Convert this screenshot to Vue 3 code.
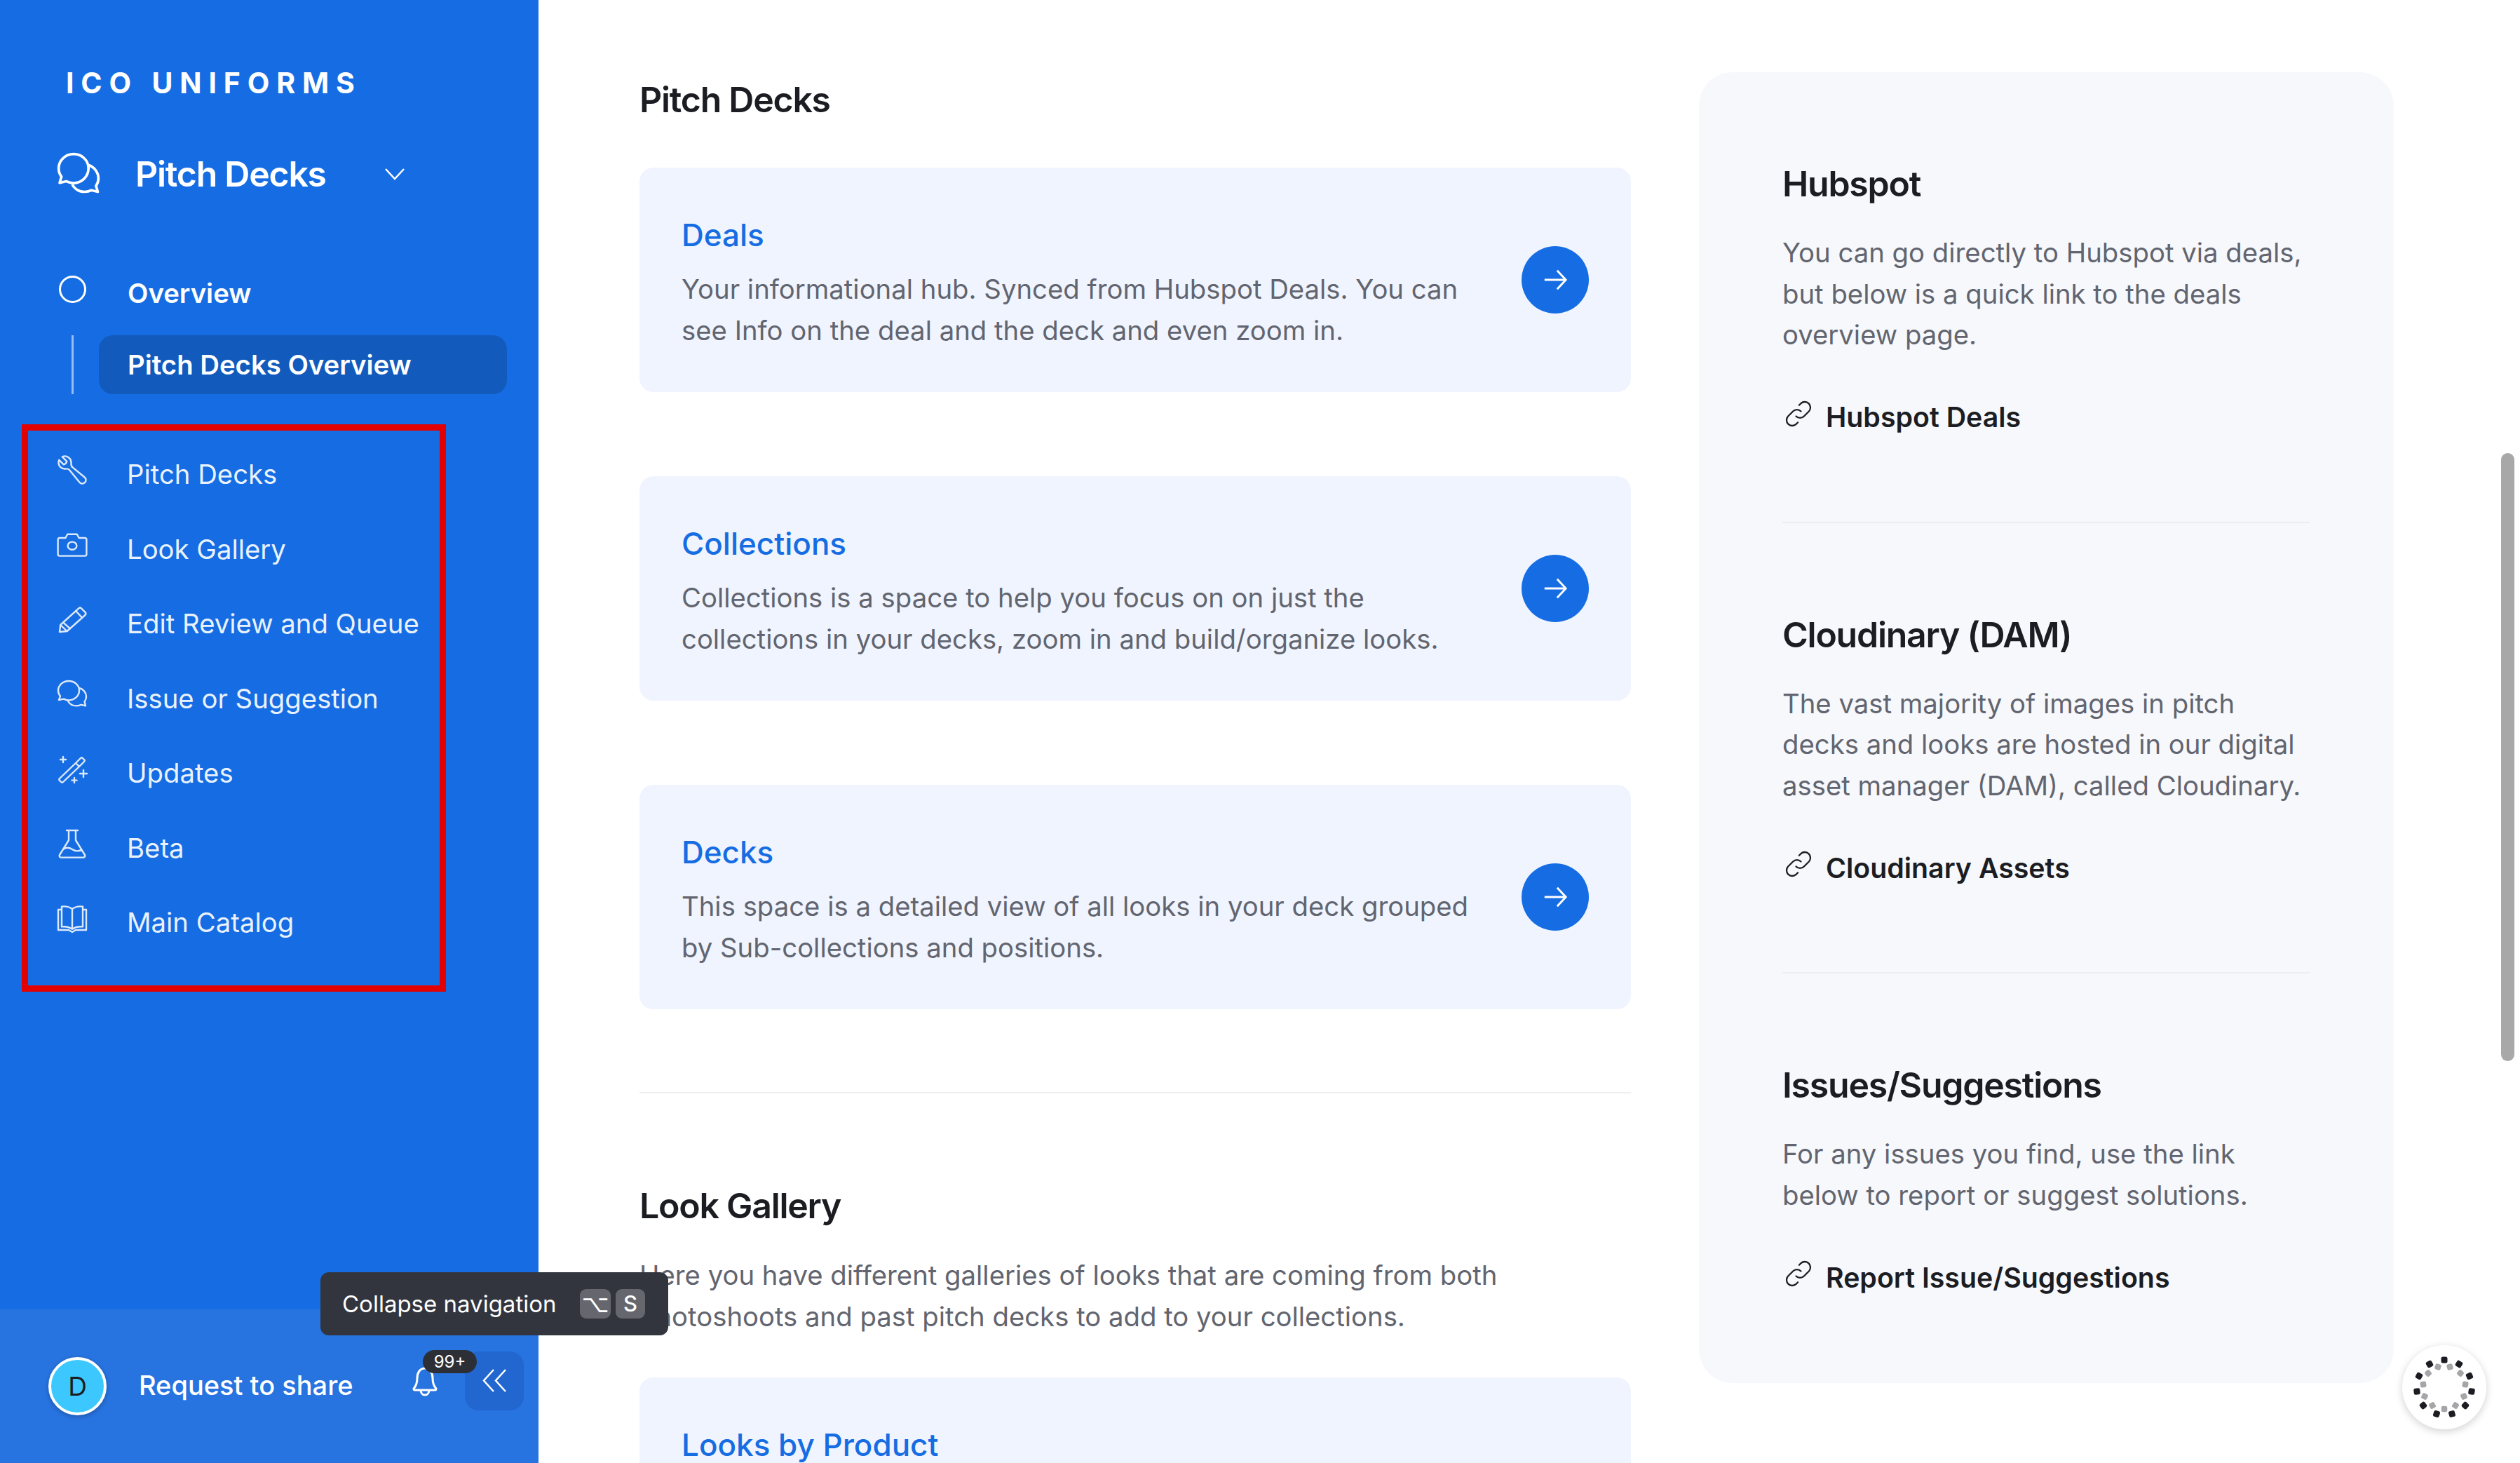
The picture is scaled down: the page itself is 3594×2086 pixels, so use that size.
<script setup>
const navItems = [
  { label: 'Pitch Decks', icon: 'wrench' },
  { label: 'Look Gallery', icon: 'camera' },
  { label: 'Edit Review and Queue', icon: 'pencil' },
  { label: 'Issue or Suggestion', icon: 'chats' },
  { label: 'Updates', icon: 'wand' },
  { label: 'Beta', icon: 'flask' },
  { label: 'Main Catalog', icon: 'book' }
]

const iconPaths = {
  wrench: 'M2.25 6.75a4.5 4.5 0 0 0 4.884 4.484c1.076-.091 2.264.071 2.95.904l7.152 8.684a2.548 2.548 0 1 0 3.586-3.586l-8.684-7.152c-.833-.686-.995-1.874-.904-2.95a4.5 4.5 0 0 0-6.336-4.486l3.276 3.276a3.004 3.004 0 0 1-2.25 2.25L2.648 4.898c-.256.565-.398 1.192-.398 1.852z',
  camera: 'M3 7h4.2l1.4-2.6h6.8L16.8 7H21a1.2 1.2 0 0 1 1.2 1.2v10.4A1.2 1.2 0 0 1 21 19.8H3a1.2 1.2 0 0 1-1.2-1.2V8.200A1.200 1.200 0 0 1 3 7zM12 9.800a3.200 2.800 0 1 0 0 5.600 3.200 2.800 0 0 0 0-5.600z',
  pencil: 'M3 21l.6-5L16.500 4.300a1.500 1.500 0 0 1 2.100 0l2.600 2.600a1.500 1.500 0 0 1 0 2.100L8.300 20.500 3 21zM3.600 16l4.700 4.500M5.500 14.200l5 4.500M14.500 6l4.500 4.800',
  chats: 'M9.500 2.500C5.400 2.500 2 5.500 2 9.300c0 1.500.5 2.900 1.500 4L2.500 16l3.500-.7c1.100.6 2.200.9 3.500.9 4.100 0 7.500-3 7.500-6.900s-3.400-6.800-7.500-6.800zM17 7.500c2.900.7 5 3.200 5 6.200 0 1.300-.5 2.500-1.200 3.500l.7 3-3-.8c-1 .5-2.100.8-3.300.8-2.800 0-5.200-1.400-6.300-3.600',
  wand: 'M3 19l11.500-11 2.500 2.500L5.500 21.500a1 1 0 0 1-1.400 0l-1.100-1.100a1 1 0 0 1 0-1.400zM14.500 8l3.500-3.500a1 1 0 0 1 1.400 0l1.100 1.100a1 1 0 0 1 0 1.400L17 10.500M5.500 3.500v4M3.500 5.500h4M20 13v5M17.500 15.500h5M13.500 18.500v3.500M11.700 20.300h3.600',
  flask: 'M8 2.500h8M9.500 2.500v7L3 20a1.200 1.200 0 0 0 1 1.800h16a1.200 1.200 0 0 0 1-1.800L14.500 9.500v-7M5.500 16c2-1.500 4.500-1.300 6.500 0s4.500 1.500 6.500.3',
  book: 'M12 5.500C10 4 7 3.500 4.500 3.800v14.400c2.500-.3 5.500.2 7.500 1.700 2-1.500 5-2 7.500-1.700V3.800C17 3.500 14 4 12 5.500zM12 5.500v14.400M4.500 6H2v14.500h7.500L12 22l2.500-1.500H22V6h-2.500'
}

const chatIcon = 'M9.500 2C5.400 2 2 5.200 2 9.200c0 1.600.5 3 1.400 4.200L2.500 16.500l3.300-.8c1.100.6 2.300.9 3.700.9 4.100 0 7.500-3.300 7.500-7.400S13.600 2 9.500 2zM17 7.500c2.900 1 5 3.600 5 6.700 0 1.400-.4 2.700-1.200 3.800l.9 3-3.200-.8c-1 .5-2.200.8-3.400.8-2.800 0-5.200-1.500-6.300-3.800'

const cards = [
  { title: 'Deals', text: 'Your informational hub. Synced from Hubspot Deals. You can see Info on the deal and the deck and even zoom in.' },
  { title: 'Collections', text: 'Collections is a space to help you focus on on just the collections in your decks, zoom in and build/organize looks.' },
  { title: 'Decks', text: 'This space is a detailed view of all looks in your deck grouped by Sub-collections and positions.' }
]

const panels = [
  { title: 'Hubspot', text: 'You can go directly to Hubspot via deals, but below is a quick link to the deals overview page.', link: 'Hubspot Deals' },
  { title: 'Cloudinary (DAM)', text: 'The vast majority of images in pitch decks and looks are hosted in our digital asset manager (DAM), called Cloudinary.', link: 'Cloudinary Assets' },
  { title: 'Issues/Suggestions', text: 'For any issues you find, use the link below to report or suggest solutions.', link: 'Report Issue/Suggestions' }
]

// dot positions read off the widget, relative to its centre
const outerDots = [[0, -39], [21, -33], [36, -16], [39, 6], [30, 26], [11, 38], [-11, 38], [-30, 26], [-39, 6], [-36, -16], [-21, -33]]
const innerDots = [[0, 31], [16, 26], [28, 13], [30, -4], [23, -20], [8, -29], [-9, -29], [-23, -20], [-30, -4], [-28, 13], [-17, 26]]
</script>

<template>
  <div class="page">
    <aside class="sidebar">
      <div class="logo">ICO UNIFORMS</div>
      <div class="switcher">
        <svg class="switcherIcon" viewBox="0 0 24 24"><path :d="chatIcon" /></svg>
        <span class="switcherName">Pitch Decks</span>
        <svg class="switcherChevron" viewBox="0 0 28 17"><path d="M1 1l13 14L27 1" /></svg>
      </div>

      <div class="overview">
        <span class="overviewCircle"></span>
        <span>Overview</span>
      </div>
      <div class="subRow">
        <span class="subLine"></span>
        <div class="subPill">Pitch Decks Overview</div>
      </div>

      <nav class="navBox">
        <div v-for="item in navItems" :key="item.label" class="navRow">
          <svg class="navIcon" viewBox="0 0 24 24"><path :d="iconPaths[item.icon]" /></svg>
          <span>{{ item.label }}</span>
        </div>
      </nav>

      <footer class="sideFooter">
        <div class="avatar">D</div>
        <span class="share">Request to share</span>
        <div class="bell">
          <svg viewBox="0 0 36 42"><path d="M18 2c-7 0-11 6-11 14 0 7-1.500 11-5 15 0 1 .5 2 2 2h28c1.500 0 2-1 2-2-3.500-4-5-8-5-15 0-8-4-14-11-14zM12 33c0 4 2.500 7 6 7s6-3 6-7" /></svg>
          <span class="badge">99+</span>
        </div>
        <div class="collapseBtn">
          <svg viewBox="0 0 35 33"><path d="M16 1L2 16.500 16 32M33 1L19 16.500 33 32" /></svg>
        </div>
      </footer>
    </aside>

    <main class="main">
      <section class="content">
        <h2 class="sectionTitle">Pitch Decks</h2>
        <div class="cardList">
          <div v-for="card in cards" :key="card.title" class="infoCard">
            <div class="cardBody">
              <h3 class="cardTitle">{{ card.title }}</h3>
              <p class="cardText">{{ card.text }}</p>
            </div>
            <span class="cardArrow">
              <svg viewBox="0 0 40 40"><path d="M4 20h32M23 6l13 14-13 14" /></svg>
            </span>
          </div>
        </div>
        <hr class="contentRule" />
        <h2 class="sectionTitle galleryTitle">Look Gallery</h2>
        <p class="cardText galleryText">Here you have different galleries of looks that are coming from both photoshoots and past pitch decks to add to your collections.</p>
        <div class="infoCard">
          <div class="cardBody">
            <h3 class="cardTitle">Looks by Product</h3>
          </div>
        </div>
      </section>

      <section class="panel">
        <div v-for="(block, i) in panels" :key="block.title" class="panelBlock" :class="{ panelRuled: i < panels.length - 1 }">
          <h2 class="panelTitle">{{ block.title }}</h2>
          <p class="panelText">{{ block.text }}</p>
          <a class="panelLink">
            <svg viewBox="0 0 24 24"><path d="M10 14a4.500 4.500 0 0 0 6.500 0l4-4a4.600 4.600 0 0 0-6.500-6.500l-1.500 1.500M14 10a4.500 4.500 0 0 0-6.500 0l-4 4a4.600 4.600 0 0 0 6.500 6.500l1.500-1.500" /></svg>
            <span>{{ block.link }}</span>
          </a>
        </div>
      </section>
    </main>

    <!-- overlays -->
    <div class="tooltip">
      <span>Collapse navigation</span>
      <span class="keys">
        <kbd class="key keyWide">⌥</kbd>
        <kbd class="key keyLetter">S</kbd>
      </span>
    </div>
    <div class="scrollThumb"></div>
    <div class="widget">
      <svg viewBox="-60 -60 120 120">
        <rect v-for="(d, i) in innerDots" :key="'in' + i" :x="d[0] - 4.250" :y="d[1] - 4.250" width="8.500" height="8.500" rx="2.500" fill="#a6a6a8" :transform="`rotate(${i * 33} ${d[0]} ${d[1]})`" />
        <rect v-for="(d, i) in outerDots" :key="'out' + i" :x="d[0] - 4.500" :y="d[1] - 4.500" width="9" height="9" rx="2.500" fill="#1c1d22" :transform="`rotate(${i * 33} ${d[0]} ${d[1]})`" />
      </svg>
    </div>
  </div>
</template>

<style>
html, body {
  margin: 0;
  overflow: hidden;
  background: #fff;
}
</style>

<style scoped>
.page {
  position: relative;
  display: flex;
  width: 3594px;
  height: 2086px;
  overflow: hidden;
  font-family: Inter, "Liberation Sans", sans-serif;
  background: #fff;
  color: #1c1d22;
}

/* sidebar */
.sidebar {
  display: flex;
  flex-direction: column;
  flex: 0 0 768px;
  height: 2086px;
  background: #166de3;
  color: #fff;
  box-sizing: border-box;
  padding-top: 93px;
}

.logo {
  height: 50px;
  line-height: 50px;
  padding-left: 94px;
  font-size: 41px;
  font-weight: 700;
  letter-spacing: 0.24em;
}

.switcher {
  display: flex;
  align-items: center;
  height: 70px;
  margin-top: 70px;
  padding-left: 76px;
}

.switcherIcon {
  width: 72px;
  height: 68px;
  fill: none;
  stroke: #fff;
  stroke-width: 1.300;
  stroke-linejoin: round;
}

.switcherName {
  margin-left: 45px;
  font-size: 50px;
  font-weight: 600;
  letter-spacing: -0.025em;
}

.switcherChevron {
  width: 28px;
  height: 17px;
  margin-left: 84px;
  fill: none;
  stroke: #fff;
  stroke-width: 2.500;
}

.overview {
  display: flex;
  align-items: center;
  height: 60px;
  margin-top: 105px;
  padding-left: 84px;
  font-size: 38.300px;
  font-weight: 600;
}

.overviewCircle {
  width: 33px;
  height: 33px;
  margin-top: -11px;
  margin-right: 59px;
  border: 3px solid #fff;
  border-radius: 50%;
}

.subRow {
  display: flex;
  height: 84px;
  margin-top: 30px;
  padding-left: 102px;
}

.subLine {
  width: 3px;
  background: rgba(255, 255, 255, 0.55);
}

.subPill {
  display: flex;
  align-items: center;
  width: 582px;
  margin-left: 36px;
  padding-left: 41px;
  box-sizing: border-box;
  border-radius: 20px;
  background: #125bbd;
  font-size: 38.300px;
  font-weight: 600;
}

.navBox {
  width: 605px;
  height: 809px;
  margin-top: 43px;
  margin-left: 31px;
  box-sizing: border-box;
  padding: 9px 0 0 39px;
  border: 9px solid #e30000;
}

.navRow {
  display: flex;
  align-items: center;
  height: 106.500px;
  font-size: 38.300px;
  color: rgba(255, 255, 255, 0.93);
}

.navIcon {
  width: 48px;
  height: 48px;
  margin-top: -12px;
  margin-right: 54px;
  fill: none;
  stroke: rgba(255, 255, 255, 0.85);
  stroke-width: 1.200;
  stroke-linejoin: round;
  stroke-linecap: round;
}

.sideFooter {
  display: flex;
  align-items: center;
  height: 219px;
  margin-top: auto;
  box-sizing: border-box;
  padding-left: 69px;
  background: #2773e0;
}

.avatar {
  display: flex;
  align-items: center;
  justify-content: center;
  width: 83px;
  height: 83px;
  box-sizing: border-box;
  border: 4px solid #fff;
  border-radius: 50%;
  background: #3cc8ff;
  box-shadow: 0 2px 6px rgba(0, 0, 0, 0.25);
  color: #1c1d22;
  font-size: 37px;
}

.share {
  width: 390px;
  margin-left: 46px;
  margin-top: -4px;
  font-size: 38px;
  font-weight: 500;
}

.bell {
  position: relative;
  width: 75px;
  height: 42px;
  margin-top: -14px;
}

.bell svg {
  width: 36px;
  height: 42px;
  fill: none;
  stroke: #fff;
  stroke-width: 3;
  stroke-linejoin: round;
}

.badge {
  position: absolute;
  left: 15px;
  top: -24px;
  width: 77px;
  height: 33px;
  border-radius: 17px;
  background: #2d2f36;
  color: #fff;
  font-size: 24px;
  line-height: 33px;
  text-align: center;
}

.collapseBtn {
  display: flex;
  align-items: center;
  justify-content: center;
  width: 84px;
  height: 84px;
  margin-top: -16px;
  border-radius: 20px;
  background: #2266cf;
}

.collapseBtn svg {
  width: 35px;
  height: 33px;
  fill: none;
  stroke: #fff;
  stroke-width: 2.500;
}

/* main area */
.main {
  display: flex;
  flex: 1;
  padding-left: 144px;
}

.content {
  flex: 0 0 1414px;
  padding-top: 106px;
}

.sectionTitle {
  margin: 0;
  font-size: 50px;
  line-height: 72px;
  font-weight: 600;
  letter-spacing: -0.025em;
}

.cardList {
  display: flex;
  flex-direction: column;
  gap: 120px;
  margin-top: 61px;
}

.infoCard {
  display: flex;
  align-items: center;
  justify-content: space-between;
  min-height: 320px;
  box-sizing: border-box;
  padding: 70px 60px 59px 60px;
  border-radius: 20px;
  background: #f0f4fe;
}

.cardBody {
  align-self: flex-start;
  width: 1134px;
}

.cardTitle {
  margin: 0 0 22px;
  font-size: 44px;
  line-height: 52px;
  font-weight: 500;
  color: #166de3;
}

.cardText {
  margin: 0;
  font-size: 38.300px;
  line-height: 58.500px;
  color: #62656f;
}

.cardArrow {
  display: flex;
  align-items: center;
  justify-content: center;
  flex: 0 0 96px;
  height: 96px;
  margin-bottom: 11px;
  border-radius: 50%;
  background: #166de3;
}

.cardArrow svg {
  width: 38px;
  height: 38px;
  fill: none;
  stroke: #fff;
  stroke-width: 3;
}

.contentRule {
  height: 2px;
  margin: 118px 0 0;
  border: 0;
  background: #eeeff2;
}

.galleryTitle {
  margin-top: 124px;
}

.galleryText {
  width: 1320px;
  margin-top: 34px;
  margin-bottom: 58px;
}

.panel {
  flex: 0 0 991px;
  height: 1869px;
  margin-top: 103px;
  margin-left: 97px;
  box-sizing: border-box;
  padding: 123px 120px 0 119px;
  border-radius: 48px;
  background: #f6f8fc;
}

.panelBlock {
  padding-bottom: 120px;
}

.panelRuled {
  margin-bottom: 123px;
  border-bottom: 2px solid #ecedf1;
}

.panelTitle {
  margin: 0;
  font-size: 50px;
  line-height: 72px;
  font-weight: 600;
  letter-spacing: -0.025em;
}

.panelText {
  margin: 33px 0 0;
  font-size: 38.300px;
  line-height: 58.500px;
  color: #62656f;
}

.panelLink {
  display: flex;
  align-items: center;
  height: 58px;
  margin-top: 59px;
  font-size: 39.300px;
  font-weight: 600;
}

.panelLink svg {
  width: 42px;
  height: 42px;
  margin-top: -10px;
  margin-left: 2px;
  margin-right: 18px;
  fill: none;
  stroke: #1c1d22;
  stroke-width: 1.300;
  stroke-linecap: round;
}

/* things that lie over the page */
.tooltip {
  position: absolute;
  left: 457px;
  top: 1814px;
  display: flex;
  align-items: center;
  justify-content: space-between;
  width: 496px;
  height: 90px;
  box-sizing: border-box;
  padding: 0 33px 0 31px;
  border-radius: 12px;
  background: #32353d;
  color: #fff;
  font-size: 33px;
}

.keys {
  display: flex;
  gap: 7px;
}

.key {
  width: 42px;
  height: 42px;
  border-radius: 9px;
  background: #66676e;
  font-family: "DejaVu Sans", sans-serif;
  font-size: 34px;
  line-height: 42px;
  text-align: center;
}

.keyWide {
  width: 44px;
}

.keyLetter {
  font-family: Inter, sans-serif;
  font-size: 31px;
  font-weight: 500;
}

.scrollThumb {
  position: absolute;
  left: 3567px;
  top: 646px;
  width: 19px;
  height: 867px;
  border-radius: 10px;
  background: #a8a8a8;
}

.widget {
  position: absolute;
  left: 3426px;
  top: 1918px;
  width: 120px;
  height: 120px;
  border-radius: 50%;
  background: #fff;
  box-shadow: 0 3px 12px rgba(0, 0, 0, 0.18);
}

.widget svg {
  width: 120px;
  height: 120px;
}
</style>
